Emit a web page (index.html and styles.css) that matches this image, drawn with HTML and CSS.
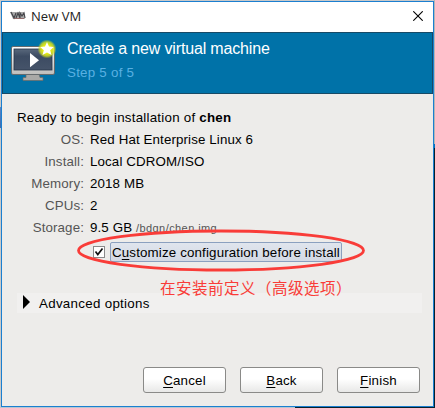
FILE: index.html
```
<!DOCTYPE html>
<html lang="en">
<head>
<meta charset="utf-8">
<title>New VM</title>
<link rel="stylesheet" href="styles.css">
</head>
<body>
<main class="window">
  <div class="titlebar">
    <svg class="app-icon" width="16" height="10" viewBox="0 0 16 10">
      <path d="M0 1h14l1 7H3z" fill="#aaa"/>
      <path d="M1 1l3 6 2-5M6 7l2-5 2 5M10 7V2l2 3 2-3 1 5" fill="none" stroke="#45454a" stroke-width="1.2"/>
      <path d="M4 7.5h10" stroke="#8d5454" stroke-width=".7"/>
    </svg>
    <span class="window-title">New VM</span>
    <svg class="close" width="10" height="10" viewBox="0 0 10 10"><path d="M.3.3l9.4 9.4M9.7.3L.3 9.7" stroke="#000" stroke-width="1.1"/></svg>
  </div>
  <header class="header">
    <svg class="vm-icon" width="46" height="43" viewBox="0 0 46 43">
      <defs>
        <linearGradient id="frame" x2="0" y2="1"><stop stop-color="#fff"/><stop offset="1" stop-color="#bdbdbb"/></linearGradient>
        <linearGradient id="screen" x2="0" y2="1"><stop stop-color="#59687c"/><stop offset=".35" stop-color="#3c4b62"/><stop offset="1" stop-color="#46546a"/></linearGradient>
        <radialGradient id="glow"><stop offset=".45" stop-color="#e8ed12"/><stop offset=".75" stop-color="#d3df20" stop-opacity=".8"/><stop offset="1" stop-color="#b7cf30" stop-opacity="0"/></radialGradient>
      </defs>
      <path d="M16 35h13l1 3.500h3v3H13v-3h3z" fill="#a9a9a7" stroke="#686866" stroke-width=".7"/>
      <rect x="1.5" y="7.5" width="43" height="28" rx="1.5" fill="url(#frame)" stroke="#656b6e"/>
      <rect x="4" y="10" width="38" height="21" fill="url(#screen)" stroke="#27364a" stroke-width=".8"/>
      <path d="M20 14l9 7.200-9 7z" fill="#fff"/>
      <circle cx="37" cy="10" r="9.500" fill="url(#glow)"/>
      <path d="M37 3l2 4.600 4.800.4-3.600 3.200 1.300 4.800-4.500-2.600-4.500 2.600 1.300-4.800L30.200 8l4.800-.4z" fill="#fff"/>
    </svg>
    <div class="heading">
      <h1>Create a new virtual machine</h1>
      <p>Step 5 of 5</p>
    </div>
  </header>
  <section class="content">
    <p class="ready">Ready to begin installation of <b>chen</b></p>
    <dl class="summary">
      <dt>OS:</dt><dd>Red Hat Enterprise Linux 6</dd>
      <dt>Install:</dt><dd>Local CDROM/ISO</dd>
      <dt>Memory:</dt><dd>2018 MB</dd>
      <dt>CPUs:</dt><dd>2</dd>
      <dt>Storage:</dt><dd>9.5 GB <small>/bdqn/chen.img</small></dd>
    </dl>
    <div class="customize">
      <svg class="checkbox" width="12" height="12" viewBox="0 0 12 12"><rect x=".5" y=".5" width="11" height="11" fill="#fff" stroke="#8a8a8a"/><path d="M2.500 5.500l2.300 3L9.500 2.500" fill="none" stroke="#111" stroke-width="1.700"/></svg>
      <span class="check-label">C<u>u</u>stomize configuration before install</span>
    </div>
    <svg class="ellipse" width="292" height="44" viewBox="0 0 292 44"><ellipse cx="146" cy="21.500" rx="142.500" ry="19.500" fill="none" stroke="#f93c38" stroke-width="2.800"/></svg>
    <p class="note">在安装前定义（高级选项）</p>
    <div class="advanced">
      <svg width="7" height="14" viewBox="0 0 7 14"><path d="M0 0l7 7-7 7z" fill="#000"/></svg>
      <span>Advanced options</span>
    </div>
  </section>
  <footer class="actions">
    <button><u>C</u>ancel</button>
    <button><u>B</u>ack</button>
    <button><u>F</u>inish</button>
  </footer>
</main>
</body>
</html>
```
FILE: styles.css
```
* { box-sizing: border-box; }
body {
  margin: 0;
  width: 435px;
  height: 408px;
  padding: 1px;
  overflow: hidden;
  background:
    linear-gradient(#5b86c4, #3c6cb0) 0 107px / 1px 21px no-repeat,
    linear-gradient(#b5b5b5 144px, #0072c0 144px 148px, #06202c 148px) 434px 0 / 1px 100% no-repeat,
    linear-gradient(90deg, #b8c6d2 295px, #06202c 295px) 0 407px / 100% 1px no-repeat,
    #c9c9c9;
  font-family: "Liberation Sans", "Noto Sans CJK SC", sans-serif;
  font-size: 13.33px;
  color: #000;
}
p, h1, dl, dd { margin: 0; }
u { text-underline-offset: 2px; text-decoration-thickness: 1px; text-decoration-skip-ink: none; }
.window {
  position: relative;
  width: 433px;
  height: 406px;
  border: 1px solid #1b7fd0;
  background: #edecea;
  display: flex;
  flex-direction: column;
}
.titlebar {
  height: 30px;
  background: #fff;
  display: flex;
  align-items: center;
  padding: 0 10px 2px 8px;
  flex: none;
}
.window-title {
  margin-left: 5px;
  font: 13px/20px "Open Sans", sans-serif;
  letter-spacing: .05px;
  color: #222;
}
.close { margin-left: auto; }
.header {
  height: 62px;
  flex: none;
  border: 1px solid #174a66;
  background: #0072a8;
  display: flex;
  padding: 6px 0 0 7px;
}
.heading { margin-left: 11px; }
.heading h1 {
  font-size: 16px;
  font-weight: 400;
  line-height: 20px;
  letter-spacing: -.16px;
  color: #fff;
}
.heading p {
  margin-top: 4px;
  line-height: 20px;
  letter-spacing: .25px;
  color: #59b0e2;
}
.content { padding: 13px 11px 0 15px; }
.ready { line-height: 22px; letter-spacing: .24px; white-space: nowrap; }
.summary {
  display: grid;
  grid-template-columns: 67px 1fr;
  column-gap: 6px;
  grid-auto-rows: 22px;
  line-height: 22px;
  letter-spacing: .12px;
}
.summary dt { text-align: right; color: #555; }
.summary small { font-size: 11px; color: #555; letter-spacing: .42px; }
.customize { display: flex; align-items: center; height: 20px; margin: 3px 0 0 76px; }
.check-label {
  margin-left: 5px;
  width: 232px;
  height: 20px;
  line-height: 19px;
  padding-left: 1px;
  white-space: nowrap;
  border: 1px solid #8ba0bf;
  border-radius: 2px;
  background: linear-gradient(#e0e5ed, #d3d9e4);
  letter-spacing: .15px;
}
.ellipse { position: absolute; left: 73px; top: 227px; }
.note {
  margin: 15px 0 0 143px;
  font: 400 15.5px/20px "Noto Sans CJK SC", sans-serif;
  letter-spacing: .5px;
  color: #f93c38;
  white-space: nowrap;
}
.advanced {
  height: 20px;
  margin-top: -4px;
  padding-left: 6px;
  display: flex;
  align-items: center;
  background: #f1f0ef;
  letter-spacing: .3px;
}
.advanced svg { margin-top: -3px; }
.advanced span { margin-left: 9px; }
.actions {
  margin-top: auto;
  padding: 0 13px 13px;
  display: flex;
  justify-content: flex-end;
  gap: 14px;
}
button {
  width: 83px;
  height: 26px;
  padding: 0;
  border: 1px solid #8a8a88;
  border-radius: 3px;
  background: linear-gradient(#fff 45%, #e8e8e7);
  font: inherit;
  color: #000;
  letter-spacing: .2px;
}
```
